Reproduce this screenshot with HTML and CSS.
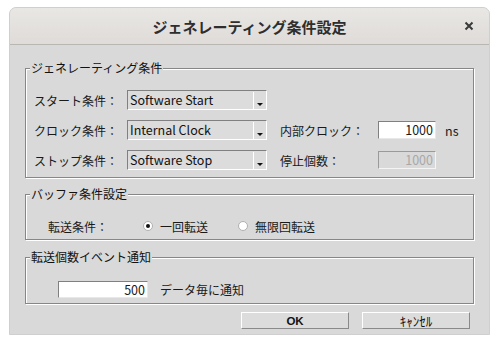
FILE: index.html
```html
<!DOCTYPE html>
<html lang="ja">
<head>
    <meta charset="UTF-8">
    <title>ジェネレーティング条件設定</title>
    <link rel="stylesheet" href="styles.css">
</head>
<body>
    <div class="window">
        <!-- Title bar -->
        <div class="titlebar">
            <span></span>
            <span class="title">ジェネレーティング条件設定</span>
            <svg class="close" width="10" height="10" viewBox="0 0 10 10">
                <path d="M1.5 1.5 L8.5 8.5 M8.5 1.5 L1.5 8.5" stroke="#3a3a3a" stroke-width="2" fill="none"/>
            </svg>
        </div>

        <div class="content">
            <!-- Generating conditions -->
            <div class="group group-gen">
                <div class="group-title">ジェネレーティング条件</div>
                <div class="row">
                    <span class="label label-main">スタート条件：</span>
                    <div class="combo"><span class="combo-text">Software Start</span><span class="drop"></span></div>
                </div>
                <div class="row">
                    <span class="label label-main">クロック条件：</span>
                    <div class="combo"><span class="combo-text">Internal Clock</span><span class="drop"></span></div>
                    <span class="label label-side">内部クロック：</span>
                    <div class="field">1000</div>
                    <span class="unit">ns</span>
                </div>
                <div class="row">
                    <span class="label label-main">ストップ条件：</span>
                    <div class="combo"><span class="combo-text">Software Stop</span><span class="drop"></span></div>
                    <span class="label label-side">停止個数：</span>
                    <div class="field disabled">1000</div>
                </div>
            </div>

            <!-- Buffer settings -->
            <div class="group group-buf">
                <div class="group-title">バッファ条件設定</div>
                <div class="row">
                    <span class="label label-xfer">転送条件：</span>
                    <label class="radio"><span class="dot checked"></span>一回転送</label>
                    <label class="radio"><span class="dot"></span>無限回転送</label>
                </div>
            </div>

            <!-- Transfer count event -->
            <div class="group group-evt">
                <div class="group-title">転送個数イベント通知</div>
                <div class="row">
                    <div class="field field-count">500</div>
                    <span class="label">データ毎に通知</span>
                </div>
            </div>

            <div class="buttons">
                <button class="btn btn-ok">OK</button>
                <button class="btn btn-cancel">ｷｬﾝｾﾙ</button>
            </div>
        </div>
    </div>
</body>
</html>
```

FILE: styles.css
```css
body {
    margin: 0;
    background: #ffffff;
    font-family: "Noto Sans CJK JP", "Noto Sans", sans-serif;
    font-size: 12px;
    color: #1a1a1a;
}

.window {
    margin: 7px 0 0 9px;
    width: 481px;
    height: 328px;
    box-sizing: border-box;
    background: #d9d9d9;
    border: 1px solid #cfcfcf;
    border-radius: 7px 7px 0 0;
    overflow: hidden;
}

/* Title bar */
.titlebar {
    display: grid;
    grid-template-columns: 1fr auto 1fr;
    align-items: center;
    height: 36px;
    background: linear-gradient(#e9e7e4, #dedbd8);
    border-bottom: 1px solid #bab7b2;
}

.title {
    font-size: 15px;
    font-weight: bold;
    color: #2e2e2e;
}

.close {
    justify-self: end;
    margin-right: 15px;
}

.content {
    padding: 23px 15px 0 15px;
}

/* Etched group frame */
.group {
    border: 1px solid #878787;
    box-shadow: 1px 1px 0 #ffffff, inset 1px 1px 0 #ffffff;
    padding: 0 8px;
}

.group-title {
    width: fit-content;
    margin: -9px 0 0 -4px;
    padding: 0 1px;
    line-height: 16px;
    background: #d9d9d9;
    color: #111;
}

.group-gen {
    padding-bottom: 7px;
}

.group-gen .group-title {
    margin-bottom: 14px;
}

.group-buf {
    margin-top: 16px;
    padding-bottom: 3px;
}

.group-buf .group-title {
    margin-bottom: 14px;
}

.group-evt {
    margin-top: 17px;
    padding-bottom: 4px;
}

.group-evt .group-title {
    margin-bottom: 14px;
}

.row {
    display: flex;
    align-items: center;
    height: 20px;
}

.row + .row {
    margin-top: 10px;
}

.label {
    white-space: nowrap;
}

.label-main {
    width: 93px;
}

.label-side {
    width: 98px;
    margin-left: 13px;
}

/* Combo box */
.combo {
    display: flex;
    align-items: stretch;
    width: 140px;
    height: 20px;
    box-sizing: border-box;
    background: #dcdcdc;
    border-top: 1px solid #808080;
    border-left: 1px solid #808080;
    border-bottom: 1px solid #ffffff;
    border-right: 1px solid #ffffff;
}

.combo-text {
    flex: 1;
    padding-left: 2px;
    line-height: 18px;
    font-size: 12.5px;
    color: #111;
}

.drop {
    width: 12px;
    margin: 1px 0 0;
    border-left: 1px solid #ffffff;
    display: flex;
    justify-content: center;
    align-items: flex-end;
    padding-bottom: 3px;
}

.drop::after {
    content: "";
    border-left: 3px solid transparent;
    border-right: 3px solid transparent;
    border-top: 3px solid #111;
}

/* Text field */
.field {
    width: 58px;
    height: 18px;
    box-sizing: border-box;
    background: #ffffff;
    border-top: 1px solid #808080;
    border-left: 1px solid #808080;
    border-bottom: 1px solid #e8e8e8;
    border-right: 1px solid #e8e8e8;
    text-align: right;
    padding-right: 2px;
    line-height: 16px;
    font-size: 12.5px;
}

.field.disabled {
    background: #d9d9d9;
    border-top-color: #9a9a9a;
    border-left-color: #9a9a9a;
    border-bottom-color: #f4f4f4;
    border-right-color: #f4f4f4;
    color: #a8a8a8;
}

.unit {
    margin-left: 9px;
    font-size: 12.5px;
}

/* Radio buttons */
.label-xfer {
    margin-left: 14px;
    width: 95px;
}

.radio {
    display: flex;
    align-items: center;
    margin-right: 30px;
}

.dot {
    width: 8px;
    height: 8px;
    border-radius: 50%;
    background: #ffffff;
    border: 1px solid #b0b0b0;
    margin-right: 7px;
    display: flex;
    justify-content: center;
    align-items: center;
}

.dot.checked::after {
    content: "";
    width: 4px;
    height: 4px;
    border-radius: 50%;
    background: #111;
}

.field-count {
    width: 90px;
    height: 17px;
    margin-left: 24px;
    margin-right: 12px;
}

/* Bottom buttons */
.buttons {
    display: flex;
    justify-content: flex-end;
    gap: 13px;
    margin-top: 8px;
    margin-right: 4px;
}

.btn {
    width: 108px;
    height: 17px;
    padding: 0;
    background: #dcdcdc;
    border-top: 1px solid #ffffff;
    border-left: 1px solid #ffffff;
    border-bottom: 1px solid #8a8a8a;
    border-right: 1px solid #8a8a8a;
    font-family: "Noto Sans CJK JP", sans-serif;
    color: #111;
}

.btn-ok {
    font-family: "Liberation Sans", sans-serif;
    font-weight: bold;
    font-size: 11.5px;
}

.btn-cancel {
    font-size: 13px;
    line-height: 13px;
}
```
